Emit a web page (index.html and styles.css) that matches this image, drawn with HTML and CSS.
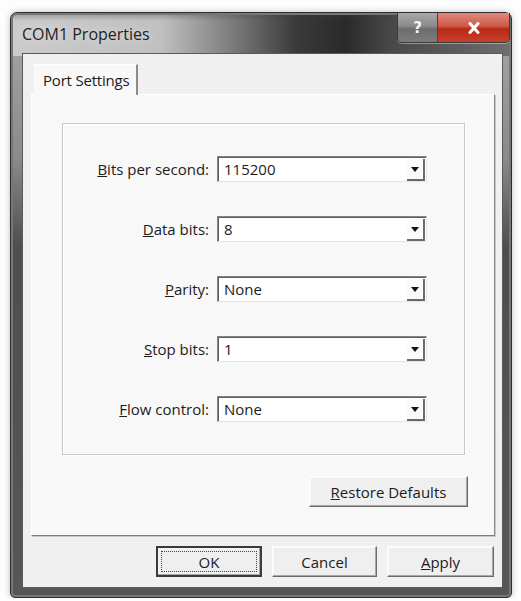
FILE: index.html
```html
<!DOCTYPE html>
<html lang="en">
<head>
    <meta charset="UTF-8">
    <meta name="viewport" content="width=device-width, initial-scale=1.0">
    <title>COM1 Properties</title>
    <link rel="stylesheet" href="styles.css">
</head>
<body>

<div class="window">
    <div class="titlebar">
        <span class="title">COM1 Properties</span>
        <div class="caption-buttons">
            <span class="cap-help">?</span>
            <span class="cap-close">
                <svg width="14" height="12" viewBox="0 0 14 12">
                    <path d="M3 1.5 L11 10.5 M11 1.5 L3 10.5" stroke="#fff" stroke-width="3" stroke-linecap="round"/>
                </svg>
            </span>
        </div>
    </div>

    <div class="client">
        <div class="tabs">
            <div class="tab active">Port Settings</div>
        </div>

        <div class="panel">
            <div class="group">
                <label><u>B</u>its per second:</label>
                <div class="combo"><span>115200</span><i class="drop"></i></div>

                <label><u>D</u>ata bits:</label>
                <div class="combo"><span>8</span><i class="drop"></i></div>

                <label><u>P</u>arity:</label>
                <div class="combo"><span>None</span><i class="drop"></i></div>

                <label><u>S</u>top bits:</label>
                <div class="combo"><span>1</span><i class="drop"></i></div>

                <label><u>F</u>low control:</label>
                <div class="combo"><span>None</span><i class="drop"></i></div>
            </div>

            <div class="panel-actions">
                <button class="btn restore"><u>R</u>estore Defaults</button>
            </div>
        </div>

        <div class="dialog-actions">
            <button class="btn default ok"><span class="focus">OK</span></button>
            <button class="btn cancel">Cancel</button>
            <button class="btn apply"><u>A</u>pply</button>
        </div>
    </div>
</div>

</body>
</html>
```

FILE: styles.css
```css
body {
    margin: 0;
    background: #fdfdfd;
    font-family: "Open Sans", "Noto Sans", sans-serif;
    color: #1c1c1c;
}
.window {
    box-sizing: border-box;
    width: 502px;
    height: 586px;
    margin: 12px 0 0 10px;
    padding: 0 8px 9px 11px;
    display: flex;
    flex-direction: column;
    border: 1px solid #2e2e2e;
    border-radius: 7px 7px 5px 5px;
    background:
        linear-gradient(to bottom, rgba(60, 60, 60, 0.35), rgba(60, 60, 60, 0) 8px) top / 100% 43px no-repeat,
        linear-gradient(to right, #cbcbcb 0%, #c0c0c0 30%, #7d7d7d 44%, #3a3a3a 57%, #2a2a2a 67%, #484848 76%, #6e6e6e 100%) top / 100% 43px no-repeat,
        linear-gradient(to bottom, #a8a8a8, #8a8a8a 25%, #4e4e4e 40%, #575757 100%);
    box-shadow: 0 0 6px rgba(0, 0, 0, 0.25), inset 0 0 0 2px #777;
}
.titlebar {
    height: 42px;
    display: flex;
    justify-content: space-between;
    align-items: flex-start;
}
.title {
    margin-top: 10px;
    font-size: 16px;
    color: #222;
    text-shadow: 0 0 8px #e8e8e8;
}
.caption-buttons {
    display: flex;
    margin-right: -7px;
    border: 1px solid #3a3a3a;
    border-top: none;
    border-radius: 0 0 5px 5px;
    overflow: hidden;
    box-shadow: 0 1px 0 rgba(255, 255, 255, 0.4);
}
.cap-help,
.cap-close {
    height: 29px;
    display: flex;
    align-items: center;
    justify-content: center;
}
.cap-help {
    width: 39px;
    background: linear-gradient(#a9a9a9, #8b8b8b 45%, #6d6d6d 55%, #7c7c7c);
    border-right: 1px solid #444;
    color: #f4f4f4;
    font-family: "DejaVu Sans", sans-serif;
    font-weight: bold;
    font-size: 15px;
}
.cap-close {
    width: 71px;
    background: linear-gradient(#e0897c, #cf5a48 45%, #b72a14 55%, #c9402a);
}

/* client area of the dialog */
.client {
    flex: 1;
    display: flex;
    flex-direction: column;
    padding: 10px 7px 10px 8px;
    background: #f0f0f0;
    border: 1px solid #5a5a5a;
    box-sizing: border-box;
}
.tabs {
    height: 30px;
    display: flex;
    padding-left: 3px;
}
.tab {
    width: 104px;
    box-sizing: border-box;
    padding: 5px 0 0 8px;
    font-size: 15px;
    letter-spacing: -0.2px;
    background: #f8f8f8;
    border-left: 1px solid #f8f8f8;
    border-top: 1px solid #fff;
    border-right: 2px solid #8c8c8c;
    margin-bottom: -1px;
    position: relative;
    z-index: 1;
}
.panel {
    height: 442px;
    box-sizing: border-box;
    background: #f8f8f8;
    border: 1px solid;
    border-color: #ffffff #8a8a8a #7c7c7c #ffffff;
    box-shadow: 1px 1px 0 #c8c8c8;
    display: flex;
    flex-direction: column;
}
.group {
    height: 332px;
    box-sizing: border-box;
    margin: 28px 29px 0 30px;
    padding: 32px 37px 0 0;
    border: 1px solid #c8c8c8;
    box-shadow: 1px 1px 0 #fff, inset 1px 1px 0 #fff;
    display: grid;
    grid-template-columns: 1fr 210px;
    grid-auto-rows: 26px;
    column-gap: 8px;
    row-gap: 34px;
    align-items: center;
}
.group label {
    text-align: right;
    font-size: 15px;
    letter-spacing: 0;
}
.combo {
    height: 26px;
    box-sizing: border-box;
    display: flex;
    align-items: center;
    justify-content: space-between;
    background: #fff;
    border: 1px solid;
    border-color: #848484 #e4e4e4 #e4e4e4 #848484;
    box-shadow: inset 1px 1px 0 #5e5e5e;
    font-size: 15px;
}
.combo span {
    padding-left: 6px;
}
.drop {
    width: 18px;
    height: 22px;
    margin: 1px 1px 0 0;
    box-sizing: border-box;
    border-right: 2px solid #6a6a6a;
    border-bottom: 2px solid #6a6a6a;
    background: #fafafa;
    display: flex;
    align-items: center;
    justify-content: center;
}
.drop::after {
    content: "";
    border-left: 4px solid transparent;
    border-right: 4px solid transparent;
    border-top: 5px solid #111;
    margin-top: 2px;
}
.panel-actions {
    display: flex;
    justify-content: flex-end;
    margin: 21px 26px 0 0;
}
.btn {
    height: 31px;
    box-sizing: border-box;
    font-family: inherit;
    font-size: 15px;
    color: #1c1c1c;
    background: #efefef;
    border: 1px solid;
    border-color: #ffffff #6a6a6a #6a6a6a #ffffff;
    box-shadow: inset -1px -1px 0 #a8a8a8, inset 1px 1px 0 #f8f8f8;
    padding: 0;
}
.restore {
    width: 159px;
}
.dialog-actions {
    display: flex;
    justify-content: flex-end;
    gap: 10px;
    margin-top: 10px;
    padding-right: 1px;
}
.ok {
    width: 106px;
}
.cancel {
    width: 105px;
}
.apply {
    width: 107px;
}
.btn.default {
    border: 2px solid #3a3a3a;
    padding: 3px;
}
.btn.default .focus {
    display: block;
    height: 100%;
    line-height: 21px;
    border: 1px dotted #444;
    box-sizing: border-box;
}
```
